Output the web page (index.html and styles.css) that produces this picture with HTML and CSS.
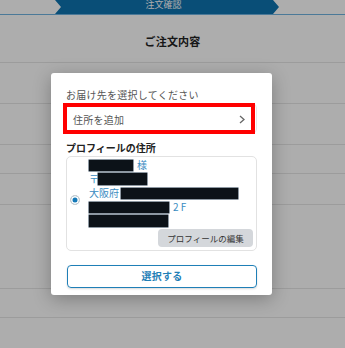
FILE: index.html
```html
<!DOCTYPE html>
<html lang="ja">
<head>
<meta charset="utf-8">
<link rel="stylesheet" href="styles.css">
</head>
<body>
<div class="page">
  <div class="steps">
    <div class="step-current"><span>注文確認</span></div>
  </div>
  <div class="title">ご注文内容</div>
  <div class="row r1"></div>
  <div class="row r2"></div>
  <div class="row r3"></div>
  <div class="row r4"></div>
  <div class="row r5"></div>
  <div class="row r6"></div>
  <div class="row r7"></div>
</div>
<div class="overlay"></div>
<div class="modal">
  <div class="modal-label">お届け先を選択してください</div>
  <div class="add-row">
    <span class="add-text">住所を追加</span>
    <svg class="chev" width="6" height="9" viewBox="0 0 6 9"><polyline points="1,1 5,4.5 1,8" fill="none" stroke="#666" stroke-width="1.3"/></svg>
    <div class="highlight"></div>
  </div>
  <div class="section-title">プロフィールの住所</div>
  <div class="card">
    <span class="radio"></span>
    <div class="addr">
      <div class="line"><span class="redact w1"></span><span class="sama">様</span></div>
      <div class="line">〒<span class="redact w2"></span></div>
      <div class="line">大阪府<span class="redact w3"></span></div>
      <div class="line"><span class="redact w4"></span><span class="floor">2 F</span></div>
      <div class="line"><span class="redact w5"></span></div>
      <div class="edit-wrap"><span class="edit-btn">プロフィールの編集</span></div>
    </div>
  </div>
  <div class="select-btn">選択する</div>
</div>
</body>
</html>
```
FILE: styles.css
```css
* { box-sizing: border-box; }
html, body { margin: 0; padding: 0; }
body {
  width: 345px;
  height: 348px;
  overflow: hidden;
  background: #fff;
  font-family: "Noto Sans CJK JP", "Noto Sans", sans-serif;
  position: relative;
}
.page { width: 345px; }
.steps {
  height: 15px;
  border-bottom: 1px solid #6fb3e0;
}
.step-current {
  margin-left: 55px;
  width: 224px;
  height: 14px;
  background: #0e73b0;
  clip-path: polygon(0 0, 218px 0, 224px 50%, 218px 100%, 0 100%, 6px 50%);
  color: #fff;
  font-size: 9px;
  line-height: 10px;
  text-align: center;
  padding-right: 7px;
}
.title {
  height: 48px;
  border-bottom: 1px solid #e6e6e6;
  text-align: center;
  font-size: 11px;
  font-weight: bold;
  letter-spacing: 0.2px;
  color: #222;
  padding-top: 18px;
  line-height: 16px;
}
.row { border-bottom: 1px solid #e6e6e6; }
.r1 { height: 41px; }
.r2 { height: 41px; }
.r3 { height: 29px; }
.r4 { height: 31px; }
.r5 { height: 84px; }
.r6 { height: 29px; }
.r7 { height: 40px; border-bottom: none; }
.overlay {
  position: absolute;
  inset: 0;
  background: rgba(0, 0, 0, 0.32);
}
.modal {
  position: absolute;
  left: 51px;
  top: 73px;
  width: 221px;
  height: 222px;
  background: #fff;
  border-radius: 3px;
  box-shadow: 0 4px 18px rgba(0, 0, 0, 0.28);
  padding: 15px 15px 0 15px;
  display: flex;
  flex-direction: column;
}
.modal-label {
  font-size: 10px;
  line-height: 14px;
  letter-spacing: 0.25px;
  color: #555;
}
.add-row {
  position: relative;
  margin-top: 2px;
  height: 29px;
  border: 1px solid #e8e8e8;
  border-radius: 4px;
  display: flex;
  align-items: center;
  justify-content: space-between;
  padding: 1px 11px 0 6px;
}
.add-text {
  font-size: 10px;
  letter-spacing: 0.25px;
  color: #555;
}
.chev { display: block; }
.highlight {
  position: absolute;
  left: -4px;
  top: -2px;
  width: 192px;
  height: 31px;
  border: 4px solid #ff0000;
}
.section-title {
  margin-top: 8px;
  font-size: 10px;
  font-weight: bold;
  line-height: 14px;
  color: #222;
}
.card {
  margin-top: 1px;
  border: 1px solid #e2e2e2;
  border-radius: 5px;
  display: flex;
  align-items: center;
  padding: 1px 3px 3px 3px;
}
.radio {
  flex: none;
  width: 10px;
  height: 10px;
  border-radius: 50%;
  border: 1px solid #cfcfcf;
  background: #1479b8;
  box-shadow: inset 0 0 0 1.5px #fff;
  margin-right: 9px;
  margin-bottom: 6px;
}
.addr {
  flex: 1;
  display: flex;
  flex-direction: column;
  color: #3a8cc1;
  font-size: 10px;
}
.line {
  height: 14px;
  line-height: 14px;
  display: flex;
  align-items: center;
}
.redact {
  display: inline-block;
  background: #0c1218;
  box-shadow: 0 0 0 0.5px #1d3347;
}
.w1 { width: 44px; height: 11px; }
.w2 { width: 49px; height: 12px; margin-left: -1px; }
.w3 { width: 117px; height: 11px; margin-left: 2px; }
.w4 { width: 80px; height: 11px; }
.w5 { width: 79px; height: 12px; }
.sama { margin-left: 4px; }
.floor { margin-left: 4px; }
.edit-wrap {
  display: flex;
  justify-content: flex-end;
  margin-top: 1px;
}
.edit-btn {
  height: 18px;
  width: 95px;
  background: #d4d7db;
  border-radius: 4px;
  color: #333;
  font-size: 8.5px;
  line-height: 18px;
  text-align: center;
}
.select-btn {
  margin: 14px 0 0 1px;
  height: 23px;
  border: 1.5px solid #1f7fb7;
  border-radius: 4px;
  color: #1f7fb7;
  font-size: 10px;
  font-weight: bold;
  letter-spacing: 0.3px;
  text-align: center;
  line-height: 20px;
  box-shadow: 0 1px 2px rgba(0, 0, 0, 0.15);
}
```
